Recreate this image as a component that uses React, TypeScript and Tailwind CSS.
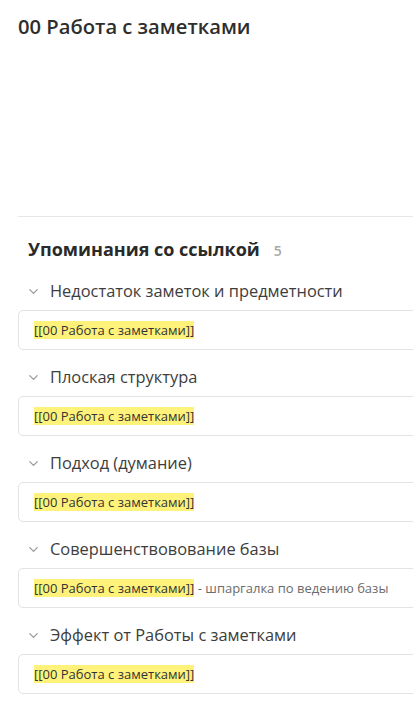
import { ChevronDown } from "lucide-react"

const mentions = [
  { title: "Недостаток заметок и предметности", note: "" },
  { title: "Плоская структура", note: "" },
  { title: "Подход (думание)", note: "" },
  { title: "Совершенствовование базы", note: " - шпаргалка по ведению базы" },
  { title: "Эффект от Работы с заметками", note: "" },
]

export default function App() {
  return (
    <div
      className="h-[722px] w-[413px] overflow-hidden bg-white"
      style={{ fontFamily: '"Open Sans", "Noto Sans", sans-serif' }}
    >
      <div className="w-[440px] pl-[18px]">
        <h1 className="pt-[12px] text-[20.2px] leading-[28px] font-semibold text-[#2e2e2e]">
          00 Работа с заметками
        </h1>
        <div className="mt-[176px] h-px bg-[#e6e6e6]" />
        <div className="mt-[19px] flex items-baseline gap-[14px] pl-[10px]">
          <h2 className="text-[18px] leading-[26px] font-bold text-[#2a2a2a]">Упоминания со ссылкой</h2>
          <span className="text-[14px] font-semibold text-[#a8a8a8]">5</span>
        </div>
        <div className="mt-[16px] flex flex-col">
          {mentions.map((m) => (
            <div key={m.title} className="mb-[14px]">
              <div className="flex h-[26px] items-center gap-[9px] pl-[8px]">
                <ChevronDown className="h-[15px] w-[15px] text-[#9a9a9a]" strokeWidth={2} />
                <span className="text-[16.4px] leading-[26px] text-[#3d3d3d]">{m.title}</span>
              </div>
              <div className="mt-[6px] flex h-[40px] items-center rounded-[5px] border border-[#e3e3e3] pl-[15px]">
                <span className="text-[13px] leading-[14px] text-[#333]">
                  <span className="bg-[#fff27a]">[[00 Работа с заметками]]</span>
                  {m.note ? <span className="text-[#6b6b6b]">{m.note}</span> : null}
                </span>
              </div>
            </div>
          ))}
        </div>
      </div>
    </div>
  )
}
